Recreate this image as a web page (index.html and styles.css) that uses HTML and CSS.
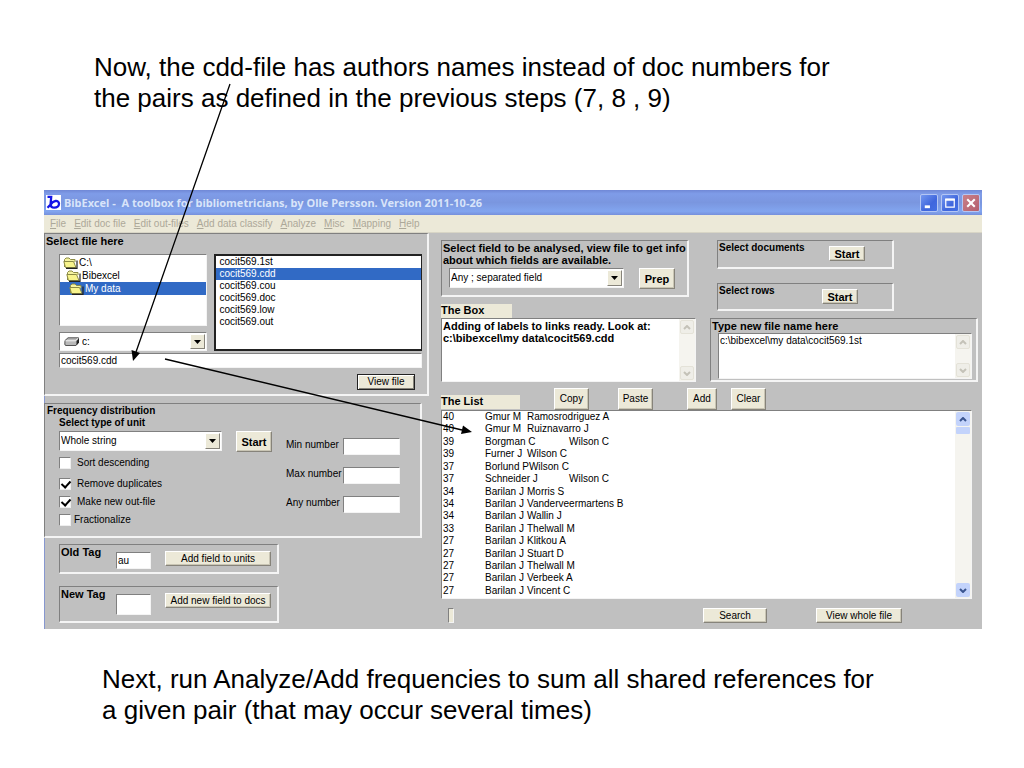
FILE: index.html
```html
<!DOCTYPE html>
<html lang="en">
<head>
<meta charset="utf-8">
<title>BibExcel - authors names in the cdd-file</title>
<link rel="stylesheet" href="styles.css">
</head>
<body>
<main class="slide">
  <p class="note note-top">Now, the cdd-file has authors names instead of doc numbers for<br>the pairs as defined in the previous steps (7, 8 , 9)</p>

  <section class="window">
    <header class="titlebar">
      <svg class="app-icon" viewBox="0 0 15 15" aria-hidden="true"><rect width="15" height="15" fill="#fff"/><path d="M1.500 1.800H5.200L4.600 9C4.600 11.500 6 12.700 8.300 12.700C11 12.700 13 11 13 8.800C13 6.800 11.500 5.800 9.500 6C7.500 6.200 6 7.500 4.600 9.500L1.500 12.800" fill="none" stroke="#1414e6" stroke-width="2.300"/></svg>
      <h1 class="title">BibExcel -&nbsp; A toolbox for bibliometricians, by Olle Persson. Version 2011-10-26</h1>
      <div class="caption-buttons">
        <button class="cap" aria-label="Minimize"><svg viewBox="0 0 17 17"><path d="M4 12.500H9.500" stroke="#fff" stroke-width="3"/></svg></button>
        <button class="cap" aria-label="Maximize"><svg viewBox="0 0 17 17"><path d="M4 5H13V13H4Z" fill="none" stroke="#fff" stroke-width="1.300"/><path d="M3.400 4.800H13.600" stroke="#fff" stroke-width="2.400"/></svg></button>
        <button class="cap cap-close" aria-label="Close"><svg viewBox="0 0 17 17"><path d="M4.500 4.500L12.500 12.500M12.500 4.500L4.500 12.500" stroke="#fff" stroke-width="2.200"/></svg></button>
      </div>
    </header>
    <nav class="menubar">
      <a href="#"><u>F</u>ile</a><a href="#"><u>E</u>dit doc file</a><a href="#"><u>E</u>dit out-files</a><a href="#"><u>A</u>dd data classify</a><a href="#"><u>A</u>nalyze</a><a href="#"><u>M</u>isc</a><a href="#"><u>M</u>apping</a><a href="#"><u>H</u>elp</a>
    </nav>

    <div class="client">
      <div class="left">
        <section class="panel files">
          <h2 class="caption">Select file here</h2>
          <div class="pickers">
            <div class="picker-col">
              <ul class="well folders">
                <li class="depth-0"><svg class="folder" viewBox="0 0 15 12"><path d="M1.500 10V2.500L3 1H6L7.500 2.500H12V5" fill="#f5f3a0" stroke="#8b8a45"/><path d="M2.500 10.500L.8 4.500H10.500L13 10.500Z" fill="#f8f48c" stroke="#8b8a45"/><path d="M3 11.300H14V3.500" fill="none" stroke="#222" stroke-width="1.200"/></svg>C:\</li>
                <li class="depth-1"><svg class="folder" viewBox="0 0 15 12"><path d="M1.500 10V2.500L3 1H6L7.500 2.500H12V5" fill="#f5f3a0" stroke="#8b8a45"/><path d="M2.500 10.500L.8 4.500H10.500L13 10.500Z" fill="#f8f48c" stroke="#8b8a45"/><path d="M3 11.300H14V3.500" fill="none" stroke="#222" stroke-width="1.200"/></svg>Bibexcel</li>
                <li class="depth-2 selected"><svg class="folder" viewBox="0 0 15 12"><path d="M1.500 10V2.500L3 1H6L7.500 2.500H12V5" fill="#f5f3a0" stroke="#8b8a45"/><path d="M2.500 10.500L.8 4.500H10.500L13 10.500Z" fill="#f8f48c" stroke="#8b8a45"/><path d="M3 11.300H14V3.500" fill="none" stroke="#222" stroke-width="1.200"/></svg>My data</li>
              </ul>
              <div class="combo drive">
                <select aria-label="Drive"><option>c:</option></select>
                <svg class="disk" viewBox="0 0 16 10"><path d="M1 3.500L4 .8H14.500V5.500L12 8.500H2Q.8 8.500 .8 7Z" fill="#b9b9b9" stroke="#555"/><path d="M1.500 3.800H11.500L14 1.200" fill="none" stroke="#f4f4f4"/><path d="M12.500 4V8.300L15 5.500V1.500Z" fill="#222"/></svg>
                <span class="drop"><svg viewBox="0 0 7 4"><path d="M0 0H7L3.500 4Z"/></svg></span>
              </div>
            </div>
            <ul class="well filelist">
              <li>cocit569.1st</li><li class="selected">cocit569.cdd</li><li>cocit569.cou</li><li>cocit569.doc</li><li>cocit569.low</li><li>cocit569.out</li>
            </ul>
          </div>
          <input class="well filename" aria-label="File name" value="cocit569.cdd">
          <div class="view-row"><button class="btn default">View file</button></div>
        </section>

        <section class="panel freq">
          <h2 class="caption">Frequency distribution</h2>
          <div class="freq-body">
            <div class="units">
              <label class="caption" for="unit">Select type of unit</label>
              <div class="unit-row">
                <div class="combo unit"><select id="unit"><option>Whole string</option></select><span class="drop"><svg viewBox="0 0 7 4"><path d="M0 0H7L3.500 4Z"/></svg></span></div>
                <button class="btn tall strong">Start</button>
              </div>
              <div class="checks">
                <label class="spaced"><input type="checkbox">Sort descending</label>
                <label><input type="checkbox" checked>Remove duplicates</label>
                <label><input type="checkbox" checked>Make new out-file</label>
                <label class="near"><input type="checkbox">Fractionalize</label>
              </div>
            </div>
            <div class="numbers">
              <label for="min">Min number</label><input class="well" id="min">
              <label for="max">Max number</label><input class="well" id="max">
              <label for="any">Any number</label><input class="well" id="any">
            </div>
          </div>
        </section>

        <section class="panel tag">
          <label class="caption" for="old">Old Tag</label><input class="well" id="old" value="au"><button class="btn">Add field to units</button>
        </section>
        <section class="panel tag tag-new">
          <label class="caption" for="new">New Tag</label><input class="well" id="new"><button class="btn">Add new field to docs</button>
        </section>
      </div>

      <div class="right">
        <div class="upper">
          <div class="upper-col">
            <section class="panel field">
              <label class="caption" for="field">Select field to be analysed, view file to get info<br>about which fields are available.</label>
              <div class="field-row">
                <div class="combo fieldtype"><select id="field"><option>Any ; separated field</option></select><span class="drop"><svg viewBox="0 0 7 4"><path d="M0 0H7L3.500 4Z"/></svg></span></div>
                <button class="btn tall strong">Prep</button>
              </div>
            </section>
            <label class="tab tab-box" for="box">The Box</label>
            <div class="well memo">
              <textarea class="strong" id="box">Adding of labels to links ready. Look at:
c:\bibexcel\my data\cocit569.cdd</textarea>
              <div class="scroll off"><span><svg viewBox="0 0 8 5"><path d="M1 4L4 1L7 4"/></svg></span><span><svg viewBox="0 0 8 5"><path d="M1 1L4 4L7 1"/></svg></span></div>
            </div>
          </div>
          <div class="upper-col">
            <section class="panel start docs"><h2 class="caption">Select documents</h2><button class="btn strong">Start</button></section>
            <section class="panel start rows"><h2 class="caption">Select rows</h2><button class="btn strong">Start</button></section>
            <section class="panel newname">
              <label class="caption" for="name">Type new file name here</label>
              <div class="well memo">
                <textarea id="name">c:\bibexcel\my data\cocit569.1st</textarea>
                <div class="scroll off"><span><svg viewBox="0 0 8 5"><path d="M1 4L4 1L7 4"/></svg></span><span><svg viewBox="0 0 8 5"><path d="M1 1L4 4L7 1"/></svg></span></div>
              </div>
            </section>
          </div>
        </div>

        <div class="list-head">
          <h2 class="tab tab-list">The List</h2>
          <button class="btn tall copy">Copy</button><button class="btn tall paste">Paste</button><button class="btn tall add">Add</button><button class="btn tall clear">Clear</button>
        </div>
        <div class="well list">
          <ul class="pairs">
            <li>40&#9;Gmur M&#9;Ramosrodriguez A</li>
            <li>40&#9;Gmur M&#9;Ruiznavarro J</li>
            <li>39&#9;Borgman C&#9;Wilson C</li>
            <li>39&#9;Furner J&#9;Wilson C</li>
            <li>37&#9;Borlund PWilson C</li>
            <li>37&#9;Schneider J&#9;Wilson C</li>
            <li>34&#9;Barilan J&#9;Morris S</li>
            <li>34&#9;Barilan J&#9;Vanderveermartens B</li>
            <li>34&#9;Barilan J&#9;Wallin J</li>
            <li>33&#9;Barilan J&#9;Thelwall M</li>
            <li>27&#9;Barilan J&#9;Klitkou A</li>
            <li>27&#9;Barilan J&#9;Stuart D</li>
            <li>27&#9;Barilan J&#9;Thelwall M</li>
            <li>27&#9;Barilan J&#9;Verbeek A</li>
            <li>27&#9;Barilan J&#9;Vincent C</li>
          </ul>
          <div class="scroll"><span><svg viewBox="0 0 8 5"><path d="M1 4L4 1L7 4"/></svg></span><i class="thumb"></i><span class="end"><svg viewBox="0 0 8 5"><path d="M1 1L4 4L7 1"/></svg></span></div>
        </div>
        <div class="foot">
          <input class="well search-text" aria-label="Search text"><button class="btn search">Search</button><button class="btn whole">View whole file</button>
        </div>
      </div>
    </div>
  </section>

  <p class="note note-bottom">Next, run Analyze/Add frequencies to sum all shared references for<br>a given pair (that may occur several times)</p>

  <svg class="arrows" aria-hidden="true">
    <path d="M230 84L136 352M165 359L462 430" stroke="#000" stroke-width="1.300" fill="none"/>
    <path d="M133 361L131.500 350L140 353ZM472 432L461 434L463 425.500Z"/>
  </svg>
</main>
</body>
</html>
```

FILE: styles.css
```css
* { box-sizing: border-box; }
body { margin: 0; background: #fff; color: #000; font-family: "Liberation Sans", Arial, sans-serif; font-size: 10px; line-height: 12px; }
h1, h2, p, ul { margin: 0; padding: 0; }
ul { list-style: none; }
svg { display: block; }
button, input, select, textarea { font: inherit; color: inherit; margin: 0; border-radius: 0; outline: 0; }

.slide { position: relative; padding: 52px 42px 42px 44px; }
.note { font-size: 26px; line-height: 31px; }
.note-top { padding-left: 50px; margin-bottom: 76px; }
.note-bottom { padding-left: 58px; margin-top: 35px; }
.arrows { position: absolute; inset: 0; width: 100%; height: 100%; pointer-events: none; }

.window { background: #c0c0c0; }
.titlebar { display: flex; align-items: center; gap: 3px; height: 25px; padding: 0 2px; background: linear-gradient(#7088d6, #7f9ce8 15%, #7a96df 50%, #82a5ef 85%, #7690dc); }
.app-icon { width: 15px; height: 15px; }
.title { flex: 1; font-family: "Noto Sans", sans-serif; font-size: 11px; line-height: 16px; font-weight: 700; color: #d8e4fa; white-space: nowrap; }
.caption-buttons { display: flex; gap: 3px; }
.cap { width: 18px; height: 18px; padding: 0; border: 1px solid #b4c6f4; border-radius: 2px; background: linear-gradient(135deg, #7397ef, #3f66dd 60%, #4470e4); }
.cap svg { width: 16px; height: 16px; }
.cap-close { background: linear-gradient(135deg, #c98089, #b45f6e); }
.menubar { display: flex; gap: 8px; height: 18px; padding: 3px 6px; background: #ece9d8; border-bottom: 1px solid #d8d5c6; }
.menubar a { color: #aca899; text-decoration: none; white-space: nowrap; }

.client { display: grid; grid-template-columns: 384fr 537fr; gap: 12px; padding: 0 4px 6px 0; border-left: 1px solid #8797cf; }
.left { margin-left: -1px; }
.panel { border: 1px solid #808080; border-right: 2px solid #f4f4f4; border-bottom: 2px solid #f4f4f4; }
.caption { display: block; font-size: 11px; line-height: 12px; font-weight: 700; white-space: nowrap; }
.freq .caption, .start .caption { font-size: 10px; }
.well { background: #fff; border: 1px solid; border-color: #808080 #f4f4f4 #f4f4f4 #808080; padding: 0; }
.strong { font-weight: 700; }
.selected { background: #316ac5; color: #fff; }

.btn { height: 15px; padding: 0; background: #ece9d8; border: 1px solid; border-color: #fff #86837a #86837a #fff; box-shadow: inset -1px -1px #c9c5b4; line-height: 12px; white-space: nowrap; }
.btn.tall { height: 21px; }
.btn.strong { font-size: 11px; }
.btn.default { border-color: #222; box-shadow: inset 1px 1px #fff, inset -1px -1px #86837a; }

.combo { position: relative; height: 20px; background: #fff; border: 1px solid; border-color: #808080 #f4f4f4 #f4f4f4 #808080; }
.combo select { display: block; width: 100%; height: 100%; padding: 0 18px 0 1px; border: 0; background: none; appearance: none; }
.drop { position: absolute; top: 1px; right: 1px; bottom: 1px; width: 15px; display: grid; place-items: center; background: #ece9d8; border: 1px solid; border-color: #fff #86837a #86837a #fff; pointer-events: none; }
.drop svg { width: 7px; height: 4px; }

.files { padding: 0 5px 4px 14px; }
.files > .caption { margin: 1px 0 7px -13px; }
.pickers { display: grid; grid-template-columns: 148fr 207fr; gap: 7px; }
.picker-col { display: grid; gap: 6px; }
.folders { height: 72px; padding-top: 1px; }
.folders li { display: flex; align-items: center; gap: 1px; height: 13px; line-height: 13px; }
.folders .folder { width: 15px; height: 12px; }
.depth-0 { padding-left: 3px; }
.depth-1 { padding-left: 6px; }
.depth-2 { padding-left: 9px; }
.drive { height: 19px; }
.combo.drive select { padding-left: 22px; }
.disk { position: absolute; left: 4px; top: 4px; width: 16px; height: 10px; }
.filelist { border: 2px solid #222; border-right-width: 1px; padding: 0; }
.filelist li { padding-left: 3px; height: 12px; }
.filename { display: block; width: 100%; height: 15px; margin: 2px 0 6px; padding-left: 1px; }
.view-row { display: flex; justify-content: flex-end; padding-right: 7px; }
.view-row .btn { width: 58px; height: 16px; }

.freq { margin: 7px 7px 0 0; padding: 1px 20px 7px 14px; }
.freq > .caption { margin-left: -12px; }
.freq-body { display: flex; justify-content: space-between; }
.units { width: 213px; }
.unit-row { display: flex; justify-content: space-between; margin: 2px 0; }
.unit { width: 163px; }
.unit-row .btn, .field-row .btn { width: 36px; }
.checks label { display: flex; align-items: center; gap: 6px; height: 18px; }
.checks .spaced { margin-bottom: 3px; }
.checks .near { gap: 3px; }
.checks input { appearance: none; width: 12px; height: 12px; background: #fff; border: 1px solid; border-color: #808080 #eee #eee #808080; }
.checks input:checked::after { content: ""; display: block; width: 4px; height: 7px; margin: 0 0 0 3px; border: solid #000; border-width: 0 2px 2px 0; transform: rotate(42deg); }
.numbers { display: grid; grid-template-columns: 57px 57px; grid-auto-rows: 17px; row-gap: 12px; margin-top: 21px; align-content: start; line-height: 13px; }
.numbers input { width: 100%; height: 17px; }

.tag { display: flex; align-items: flex-start; width: 220px; height: 30px; margin: 6px 0 0 15px; padding: 0 6px 0 1px; }
.tag .caption { width: 55px; margin-top: 1px; }
.tag input { width: 35px; height: 17px; margin: 7px 14px 0 0; padding-left: 1px; }
.tag .btn { flex: 1; margin-top: 6px; }
.tag-new { height: 37px; margin-top: 12px; }
.tag-new input { height: 21px; }

.right { padding-top: 7px; min-width: 0; }
.upper { display: grid; grid-template-columns: 255fr 268fr; gap: 14px; }
.field { height: 57px; margin-right: 7px; padding-left: 1px; }
.field .caption { padding-top: 1px; }
.field-row { display: flex; gap: 15px; margin: 2px 0 0 6px; }
.fieldtype { width: 175px; }
.tab { display: block; height: 14px; font-size: 11px; line-height: 13px; font-weight: 700; background: #ece9d8; }
.tab-box { width: 71px; margin-top: 7px; }
.memo { display: flex; height: 64px; }
.memo textarea { flex: 1; min-width: 0; padding: 1px; border: 0; background: none; resize: none; overflow: hidden; }
.memo .strong { font-size: 11px; }
.scroll { display: flex; flex-direction: column; justify-content: space-between; width: 16px; padding: 1px; background: #f5f4ef; color: #3a5590; }
.scroll span { display: grid; place-items: center; height: 14px; border-radius: 2px; background: #c3d3fb; }
.scroll span svg { width: 8px; height: 5px; fill: none; stroke: currentColor; stroke-width: 2; }
.scroll.off { color: #c4c2b8; }
.scroll.off span { background: #efeee8; border: 1px solid #e4e2d8; }
.thumb { height: 7px; margin-top: 1px; border-radius: 1px; background: #c3d3fb; }
.scroll .end { margin-top: auto; }
.start { display: flex; align-items: flex-start; justify-content: space-between; width: 177px; height: 29px; margin-left: 7px; padding-left: 1px; }
.start .btn { width: 36px; margin-top: 5px; }
.docs .btn { margin-right: 27px; }
.start .caption, .newname .caption { margin-top: 1px; }
.rows { height: 28px; margin-top: 14px; }
.rows .btn { margin-right: 34px; }
.newname { height: 64px; margin-top: 7px; padding: 0 4px 0 7px; }
.newname .caption { margin-left: -6px; }
.newname .memo { height: 46px; margin-top: 1px; }

.list-head { display: flex; align-items: flex-end; margin-top: 6px; }
.list-head .btn { width: 35px; height: 22px; }
.tab-list { width: 79px; margin-bottom: 1px; }
.copy { margin-left: 34px; }
.paste { margin-left: 29px; }
.list-head .add { width: 30px; margin-left: 34px; }
.clear { margin-left: 14px; }
.list { display: flex; height: 189px; margin-right: 6px; }
.pairs { flex: 1; display: flex; flex-direction: column; justify-content: space-between; padding: 0 0 1px 1px; white-space: pre; tab-size: 42px; }
.foot { display: flex; margin-top: 9px; padding-left: 7px; }
.search-text { width: 6px; height: 15px; background: #ece9d8; }
.search { width: 64px; margin-left: 249px; }
.whole { width: 86px; margin-left: 49px; }
```
